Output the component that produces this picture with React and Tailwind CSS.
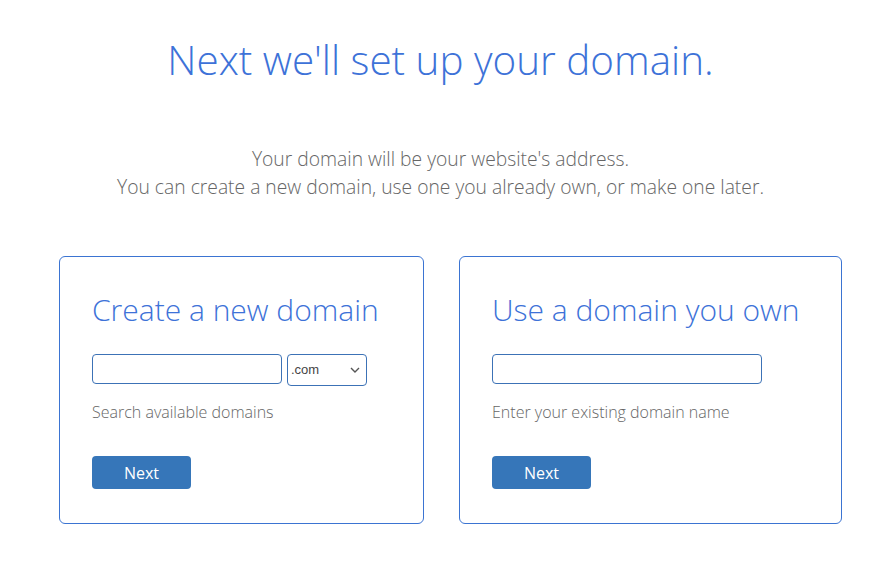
import { useState } from 'react'

function DomainCard({ title, hint, withTld, inputWidth, className }) {
  const [value, setValue] = useState('')
  const [tld, setTld] = useState('.com')

  return (
    <div className={`rounded-[6px] border border-[#3b74d2] bg-white pl-[32px] pr-[20px] pt-[33px] pb-[34px] ${className}`}>
      <h2 className="text-[30px] font-light leading-[40px] text-[#3d72d8]">{title}</h2>
      <div className="mt-[24px] flex h-[32px] items-start gap-[5px]">
        <input
          type="text"
          value={value}
          onChange={(e) => setValue(e.target.value)}
          className={`h-[30px] rounded-[4px] border border-[#3c72b6] px-2 text-sm outline-none ${inputWidth}`}
        />
        {withTld && (
          <div className="relative">
            <select
              value={tld}
              onChange={(e) => setTld(e.target.value)}
              className="h-[32px] w-[80px] appearance-none rounded-[4px] border border-[#3c72b6] bg-white pl-[3px] text-[13px] text-[#444] outline-none"
              style={{ fontFamily: '"Liberation Sans", Arial, sans-serif' }}
            >
              <option>.com</option>
              <option>.net</option>
              <option>.org</option>
            </select>
            <svg
              className="pointer-events-none absolute right-[7px] top-[13px]"
              width="10"
              height="6"
              viewBox="0 0 10 6"
              fill="none"
              stroke="#555"
              strokeWidth="1.4"
            >
              <path d="M1 1l4 4 4-4" />
            </svg>
          </div>
        )}
      </div>
      <p className="mt-[14px] text-[16px] font-light leading-[24px] text-[#666]">{hint}</p>
      <button
        type="button"
        className="mt-[32px] h-[33px] w-[99px] rounded-[4px] bg-[#3676b9] text-[16px] text-white"
      >
        Next
      </button>
    </div>
  )
}

export default function App() {
  return (
    <div
      className="min-h-screen bg-white text-center"
      style={{ fontFamily: '"Open Sans", "Noto Sans", sans-serif' }}
    >
      <h1 className="pt-[35px] text-[40.4px] font-light leading-[50px] text-[#3d72d8]">
        Next we'll set up your domain.
      </h1>
      <p className="mt-[60px] text-[19.3px] font-light leading-[28px] text-[#666]">
        Your domain will be your website's address.
        <br />
        You can create a new domain, use one you already own, or make one later.
      </p>
      <div className="mt-[55px] flex gap-[35px] pl-[59px] text-left">
        <DomainCard
          title="Create a new domain"
          hint="Search available domains"
          withTld
          inputWidth="w-[190px]"
          className="w-[365px]"
        />
        <DomainCard
          title="Use a domain you own"
          hint="Enter your existing domain name"
          inputWidth="w-[270px]"
          className="w-[383px]"
        />
      </div>
    </div>
  )
}
